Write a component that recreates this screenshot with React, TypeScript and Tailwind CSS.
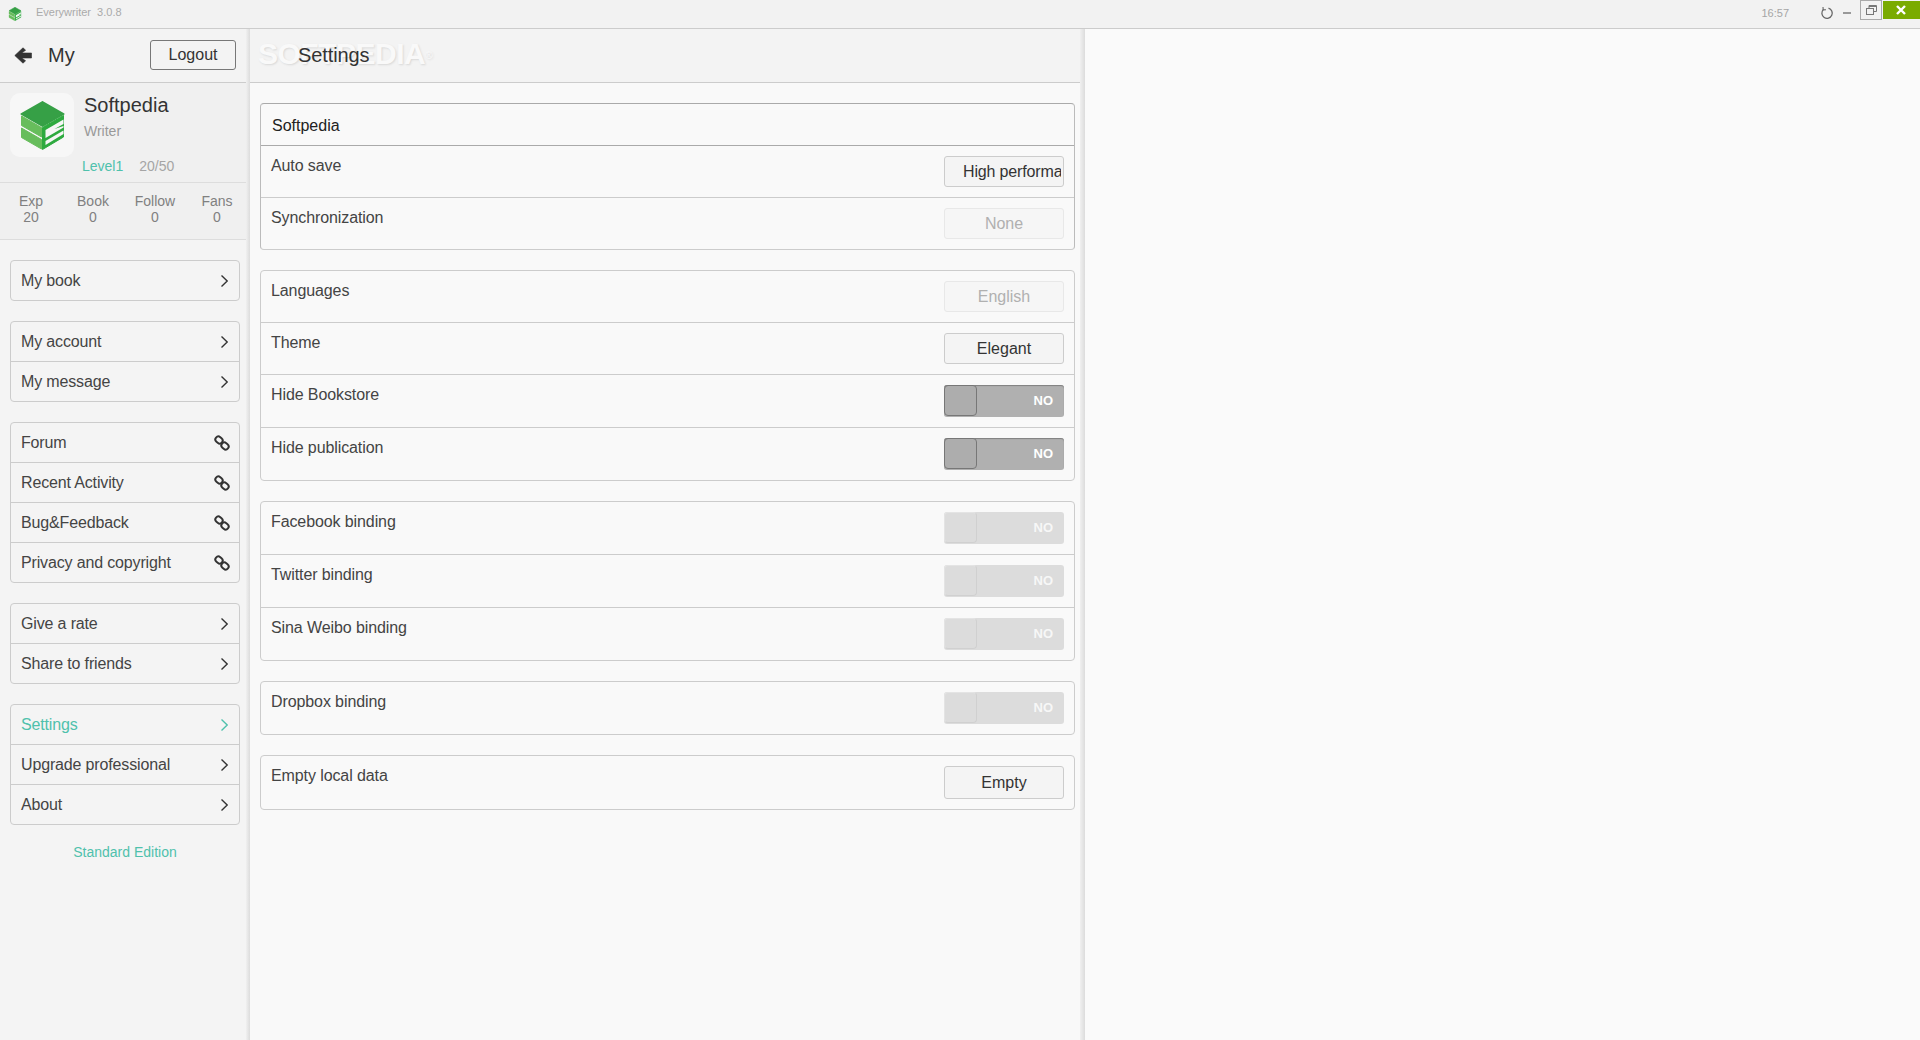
import { Fragment } from "react";

const FONT = "font-['Liberation_Sans',Arial,sans-serif]";

function Chevron({ active }: { active?: boolean }) {
  return (
    <svg width="9" height="14" viewBox="0 0 9 14" fill="none" className={active ? "text-[#4fc1ac]" : "text-[#333]"}>
      <path d="M1.5 1.5 L7.2 7 L1.5 12.5" stroke="currentColor" strokeWidth="1.4" />
    </svg>
  );
}

function LinkIcon() {
  return (
    <svg width="16" height="16" viewBox="0 0 16 16" fill="none" stroke="#333" strokeWidth="2">
      <rect x="1.2" y="2" width="7.6" height="6" rx="3" transform="rotate(40 5 5)" />
      <rect x="7.2" y="8" width="7.6" height="6" rx="3" transform="rotate(40 11 11)" />
    </svg>
  );
}

function Cube({ size }: { size: number }) {
  return (
    <svg width={size} height={size} viewBox="0 0 44 49">
      <path d="M22 1 L43 13 L22 25 L1 13 Z" fill="#36a046" stroke="#36a046" strokeLinejoin="round" strokeWidth="2" />
      <path d="M1 15 L21 26.5 L21 36 L1 24.5 Z" fill="#67bd5c" stroke="#67bd5c" strokeLinejoin="round" />
      <path d="M1 27 L21 38.5 L21 48 L1 36.5 Z" fill="#67bd5c" stroke="#67bd5c" strokeLinejoin="round" />
      <path d="M22 26.5 L43 14.5 L43 36 L22 48.5 Z" fill="#2eaa3f" stroke="#2eaa3f" strokeLinejoin="round" />
      <path d="M25 29 L43 18.5 L43 23 L34 28 L43 25 L43 26.5 L25 37 Z" fill="#f6f6f6" />
      <path d="M25 40 L43 29.5 L43 33 L25 44 Z" fill="#f6f6f6" />
    </svg>
  );
}

// soft grey edge on the right of a column
function Strip({ width }: { width: string }) {
  return <div className={`${width} shrink-0 self-stretch bg-gradient-to-r from-[#f0f0f0] to-[#dcdcdc]`} />;
}

type Item = { label: string; icon?: "link"; active?: boolean };

const menuGroups: Item[][] = [
  [{ label: "My book" }],
  [{ label: "My account" }, { label: "My message" }],
  [
    { label: "Forum", icon: "link" },
    { label: "Recent Activity", icon: "link" },
    { label: "Bug&Feedback", icon: "link" },
    { label: "Privacy and copyright", icon: "link" },
  ],
  [{ label: "Give a rate" }, { label: "Share to friends" }],
  [{ label: "Settings", active: true }, { label: "Upgrade professional" }, { label: "About" }],
];

const stats = [
  { label: "Exp", value: "20" },
  { label: "Book", value: "0" },
  { label: "Follow", value: "0" },
  { label: "Fans", value: "0" },
];

function TitleBar() {
  return (
    <div className="flex h-[29px] shrink-0 items-start justify-between border-b border-[#cccccc] bg-[#f2f2f2]">
      <div className="flex items-center pl-[8px] pt-[7px]">
        <Cube size={14} />
        <span className="ml-[14px] -mt-[4px] text-[11px] leading-[14px] text-[#aaaaaa] whitespace-pre">Everywriter  3.0.8</span>
      </div>
      <div className="flex items-start">
        <span className="mt-[7px] text-[11px] leading-[13px] text-[#a5a5a5]">16:57</span>
        <svg width="14" height="14" viewBox="0 0 14 14" fill="none" className="ml-[31px] mt-[6px]" stroke="#666" strokeWidth="1.3">
          <path d="M8.5 2.1 A5.2 5.2 0 1 1 3.2 3.6" />
          <path d="M3 1 L3.2 3.9 L6 3.7" strokeWidth="1.1" />
        </svg>
        <div className="ml-[9px] mt-[12px] h-[2px] w-[8px] bg-[#999999]" />
        <div className="ml-[9px] flex h-[20px] w-[22px] items-center justify-center border border-[#aaaaaa]">
          <svg width="11" height="10" viewBox="0 0 11 10" fill="none" stroke="#777" strokeWidth="1">
            <rect x="0.5" y="3.5" width="7" height="6" />
            <path d="M3 3.5 V0.5 H10.5 V6.5 H7.5" />
            <path d="M3 1.5 H10.5" />
          </svg>
        </div>
        <div className="ml-px mt-px flex h-[18px] w-[37px] items-center justify-center bg-[#7aab00] pr-[2px]">
          <svg width="10" height="10" viewBox="0 0 10 10" stroke="#fff" strokeWidth="2.4">
            <path d="M1 1 L9 9 M9 1 L1 9" />
          </svg>
        </div>
      </div>
    </div>
  );
}

function Sidebar() {
  return (
    <aside className="flex w-[250px] shrink-0 bg-[#f4f4f4]">
      <div className="flex min-w-0 flex-1 flex-col">
        <div className="flex h-[54px] items-center justify-between border-b border-[#cccccc] bg-[#f3f3f3] pb-px pl-[14px] pr-[10px]">
          <div className="flex items-center">
            <svg width="18" height="17" viewBox="0 0 18 17" fill="#333" stroke="#333" strokeWidth="0.6" strokeLinejoin="round">
              <path d="M9 0.8 L11.6 3.2 L7.8 6 H17.5 V11 H7.8 L11.6 13.8 L9 16.2 L0.8 8.5 Z" />
            </svg>
            <span className="ml-[16px] text-[20px] leading-[24px] text-[#333333]">My</span>
          </div>
          <button className="h-[30px] w-[86px] rounded-[3px] border border-[#777777] text-[16px] leading-[26px] text-[#333333]">Logout</button>
        </div>

        <div className="h-[100px] border-b border-[#dddddd] bg-[#f0f0f0]">
          <div className="flex pl-[10px] pt-[10px]">
            <div className="flex h-[64px] w-[64px] shrink-0 items-center justify-center rounded-[10px] bg-[#f7f7f7]">
              <Cube size={49} />
            </div>
            <div className="ml-[10px]">
              <div className="text-[20px] leading-[24px] text-[#333333]">Softpedia</div>
              <div className="mt-[6px] text-[14px] leading-[16px] text-[#999999]">Writer</div>
            </div>
          </div>
          <div className="mt-px flex pl-[82px] text-[14px] leading-[16px]">
            <span className="text-[#4fc1ac]">Level1</span>
            <span className="ml-[16px] text-[#a5a5a5]">20/50</span>
          </div>
        </div>

        <div className="grid h-[57px] grid-cols-[repeat(4,62px)] border-b border-[#dddddd] bg-[#f0f0f0] pt-[10px] text-center text-[14px] leading-[16px] text-[#808080]">
          {stats.map((s) => (
            <div key={s.label}>
              <div>{s.label}</div>
              <div>{s.value}</div>
            </div>
          ))}
        </div>

        <div className="flex flex-col gap-[20px] pl-[10px] pr-[6px] pt-[20px]">
          {menuGroups.map((group, i) => (
            <div key={i} className="overflow-hidden rounded-[4px] border border-[#cccccc]">
              {group.map((item, j) => (
                <Fragment key={item.label}>
                  {j > 0 && <div className="h-px bg-[#cccccc]" />}
                  <div
                    className={`flex h-[39px] items-center justify-between pl-[10px] text-[16px] tracking-[-0.15px] ${item.active ? "text-[#4fc1ac]" : "text-[#444444]"} ${item.icon ? "pr-[9px]" : "pr-[10px]"}`}
                  >
                    <span>{item.label}</span>
                    {item.icon ? <LinkIcon /> : <Chevron active={item.active} />}
                  </div>
                </Fragment>
              ))}
            </div>
          ))}
        </div>
        <div className="mt-[19px] pl-[4px] text-center text-[14px] leading-[16px] text-[#4fc1ac]">Standard Edition</div>
      </div>
      <Strip width="w-[4px]" />
    </aside>
  );
}

type Row =
  | { label: string; kind: "button"; value: string; disabled?: boolean; clip?: boolean; tall?: boolean }
  | { label: string; kind: "toggle"; disabled?: boolean };

const panels: Row[][] = [
  [
    { label: "Auto save", kind: "button", value: "High performance", clip: true },
    { label: "Synchronization", kind: "button", value: "None", disabled: true },
  ],
  [
    { label: "Languages", kind: "button", value: "English", disabled: true },
    { label: "Theme", kind: "button", value: "Elegant" },
    { label: "Hide Bookstore", kind: "toggle" },
    { label: "Hide publication", kind: "toggle" },
  ],
  [
    { label: "Facebook binding", kind: "toggle", disabled: true },
    { label: "Twitter binding", kind: "toggle", disabled: true },
    { label: "Sina Weibo binding", kind: "toggle", disabled: true },
  ],
  [{ label: "Dropbox binding", kind: "toggle", disabled: true }],
  [{ label: "Empty local data", kind: "button", value: "Empty", tall: true }],
];

function Toggle({ disabled }: { disabled?: boolean }) {
  return (
    <div
      className={`flex h-[32px] w-[120px] items-center justify-between rounded-[3px] ${
        disabled ? "bg-[#dcdcdc]" : "bg-[#b0b0b0] shadow-[inset_0_1px_1px_#808080]"
      }`}
    >
      <div
        className={`h-[31px] w-[33px] self-start rounded-[4px] border ${
          disabled ? "border-[#d0d0d0] border-l-[#e4e4e4] border-t-[#e4e4e4] bg-[#dcdcdc]" : "border-[#777777] bg-[#adadad]"
        }`}
      />
      <span className={`mr-[11px] text-[13px] font-bold leading-[16px] ${disabled ? "text-[#f7f7f7]" : "text-[#ffffff]"}`}>NO</span>
    </div>
  );
}

function Control({ row }: { row: Row }) {
  if (row.kind === "toggle") return <Toggle disabled={row.disabled} />;
  if (row.clip) {
    return (
      <div className="flex h-[31px] w-[120px] items-center rounded-[3px] border border-[#cccccc] bg-[#f4f4f4] pl-[18px] pr-[2px] text-[16px] tracking-[-0.15px] text-[#333333]">
        <span className="overflow-hidden whitespace-nowrap">{row.value}</span>
      </div>
    );
  }
  return (
    <div
      className={`flex w-[120px] items-center justify-center rounded-[3px] border text-[16px] ${row.tall ? "h-[33px]" : "h-[31px]"} ${
        row.disabled ? "border-[#e8e8e8] bg-[#f6f6f6] text-[#b0b0b0]" : "border-[#cccccc] bg-[#f4f4f4] text-[#333333]"
      }`}
    >
      {row.value}
    </div>
  );
}

function SettingsPanel({ rows, heading }: { rows: Row[]; heading?: string }) {
  return (
    <div className={`rounded-[4px] border ${heading ? "border-[#aaaaaa] border-b-[#cccccc] border-x-[#bbbbbb]" : "border-[#cccccc]"}`}>
      {heading && <div className="h-[42px] border-b border-[#aaaaaa] pl-[11px] pt-[13px] text-[16px] leading-[18px] text-[#222222]">{heading}</div>}
      {rows.map((row, i) => {
        const height = row.kind === "toggle" || row.tall ? (row.tall ? "h-[53px]" : "h-[52px]") : "h-[51px]";
        return (
          <Fragment key={row.label}>
            {i > 0 && <div className="h-px bg-[#cccccc]" />}
            <div className={`flex ${height} items-start justify-between pl-[10px] pr-[10px] pt-[10px]`}>
              <span className="mt-px text-[16px] leading-[18px] tracking-[-0.1px] text-[#444444]">{row.label}</span>
              <Control row={row} />
            </div>
          </Fragment>
        );
      })}
    </div>
  );
}

function Main() {
  return (
    <main className="flex w-[835px] shrink-0 bg-[#f9f9f9]">
      <div className="min-w-0 flex-1">
        <div className="relative flex h-[54px] items-center border-b border-[#cccccc] bg-[#f3f3f3] pb-px pl-[48px]">
          <span className="absolute left-[8px] top-[7px] text-[30px] font-bold leading-[36px] tracking-[-0.5px] text-[#f9f9f9] [text-shadow:1px_1px_2px_#d8d8d8]">
            SOFTPEDIA<sup className="text-[10px] font-normal">®</sup>
          </span>
          <span className="relative text-[20px] leading-[24px] tracking-[-0.1px] text-[#333333]">Settings</span>
        </div>
        <div className="flex flex-col gap-[20px] pl-[10px] pr-[5px] pt-[20px]">
          {panels.map((rows, i) => (
            <SettingsPanel key={i} rows={rows} heading={i === 0 ? "Softpedia" : undefined} />
          ))}
        </div>
      </div>
      <Strip width="w-[5px]" />
    </main>
  );
}

export default function App() {
  return (
    <div className={`flex h-[1040px] w-[1920px] flex-col overflow-hidden bg-[#fafafa] ${FONT}`}>
      <TitleBar />
      <div className="flex flex-1">
        <Sidebar />
        <Main />
        <div className="flex-1 bg-[#fafafa]" />
      </div>
    </div>
  );
}
